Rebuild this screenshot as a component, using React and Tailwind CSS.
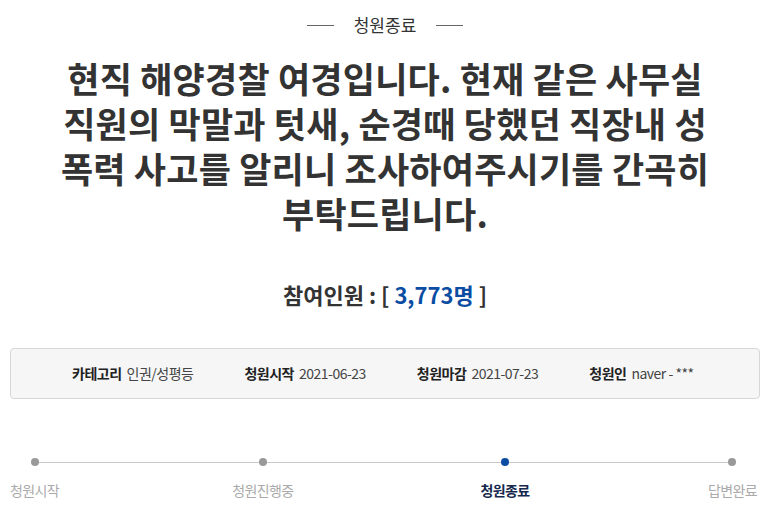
import React from 'react';

const steps = [
  { label: '청원시작', active: false },
  { label: '청원진행중', active: false },
  { label: '청원종료', active: true },
  { label: '답변완료', active: false },
];

const InfoItem = ({ title, value }) => (
  <li className="flex items-center gap-[5px]">
    <span className="font-bold text-[#222]">{title}</span>
    <span className="text-[#444]">{value}</span>
  </li>
);

const App = () => {
  return (
    <div
      className="w-[770px] h-[518px] bg-white overflow-hidden"
      style={{ fontFamily: '"Noto Sans CJK KR", "Noto Sans", sans-serif' }}
    >
      <div className="flex items-center justify-center gap-[20px] pt-[11px]">
        <span className="w-[27px] h-px bg-[#666]"></span>
        <span className="text-[17px] text-[#333] leading-[28px]">청원종료</span>
        <span className="w-[27px] h-px bg-[#666]"></span>
      </div>

      <h1 className="mt-[16px] text-center text-[35px] font-bold leading-[45px] text-[#333] tracking-[0.2px]">
        현직 해양경찰 여경입니다. 현재 같은 사무실<br />
        직원의 막말과 텃새, 순경때 당했던 직장내 성<br />
        폭력 사고를 알리니 조사하여주시기를 간곡히<br />
        부탁드립니다.
      </h1>

      <div className="mt-[44px] text-center text-[22px] font-bold text-[#333] leading-[30px]">
        참여인원 : [ <span className="text-[#0b4da2]">3,773명</span> ]
      </div>

      <div className="mx-[10px] mt-[39px] h-[51px] rounded border border-[#d7d7d7] bg-[#f6f6f6] flex items-center">
        <ul className="flex items-center gap-[51px] pl-[61px] text-[14px] tracking-[-0.5px]">
          <InfoItem title="카테고리" value="인권/성평등" />
          <InfoItem title="청원시작" value="2021-06-23" />
          <InfoItem title="청원마감" value="2021-07-23" />
          <InfoItem title="청원인" value="naver - ***" />
        </ul>
      </div>

      <div className="relative mt-[59px] ml-[10px] mr-[13px]">
        <div className="absolute left-[24px] right-[24px] top-[4px] h-px bg-[#c8c8c8]"></div>
        <div className="relative flex">
          {steps.map((s, i) => (
            <div
              key={s.label}
              className={
                'flex flex-col items-center ' +
                (i === 1 ? 'ml-[173px]' : i === 2 ? 'ml-[187px]' : i === 3 ? 'ml-auto' : '')
              }
            >
              <span
                className={
                  'w-[8px] h-[8px] rounded-full ' + (s.active ? 'bg-[#0b4da2]' : 'bg-[#999]')
                }
              ></span>
              <span
                className={
                  'mt-[14px] text-[14px] tracking-[-0.6px] whitespace-nowrap ' +
                  (s.active ? 'font-bold text-[#16284d]' : 'text-[#aaa]')
                }
              >
                {s.label}
              </span>
            </div>
          ))}
        </div>
      </div>
    </div>
  );
};

export default App;
